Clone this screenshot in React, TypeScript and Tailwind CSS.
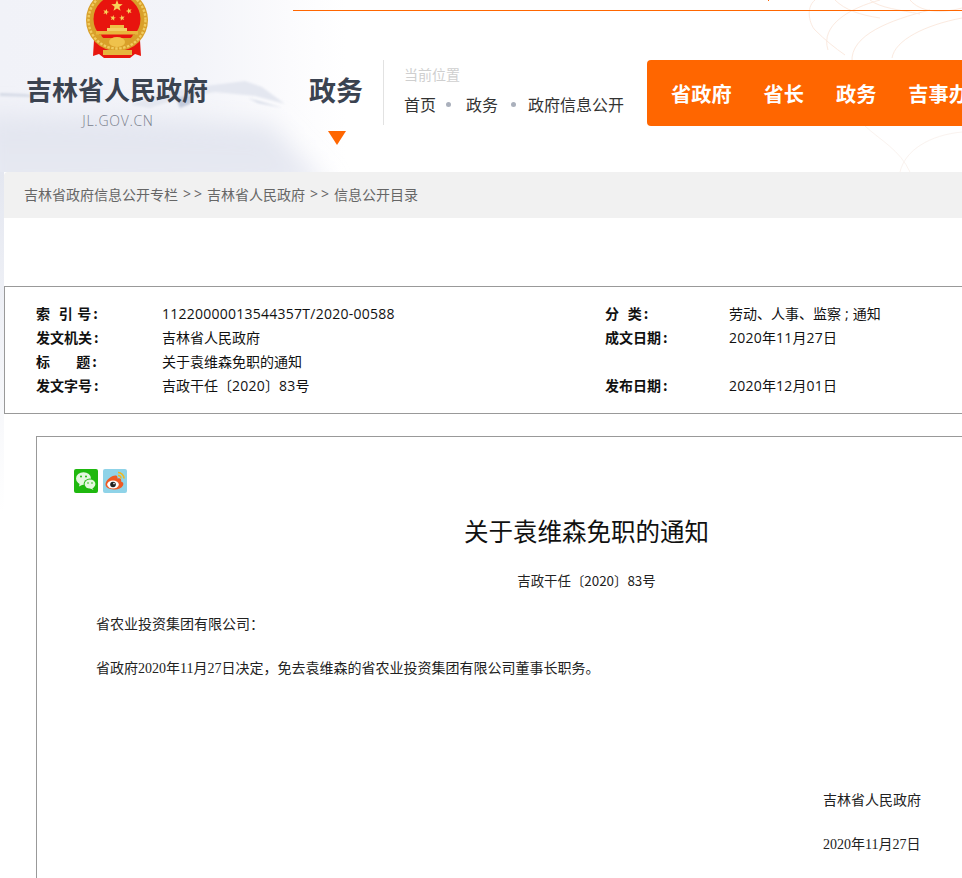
import type { ReactNode } from "react";

const cjk = "font-['Noto_Sans_CJK_SC',sans-serif]";

function Star({ x, y, r, rot = 0 }: { x: number; y: number; r: number; rot?: number }) {
  const pts: string[] = [];
  for (let i = 0; i < 10; i++) {
    const a = (Math.PI / 5) * i - Math.PI / 2 + rot;
    const d = i % 2 === 0 ? r : r * 0.42;
    pts.push(`${x + d * Math.cos(a)},${y + d * Math.sin(a)}`);
  }
  return <polygon points={pts.join(" ")} fill="#f8d25a" />;
}

function Emblem() {
  return (
    <svg width="64" height="70" viewBox="0 -11 64 70" className="block">
      <path d="M9 40 L8 56 L14 54 L19 58 L45 58 L50 54 L56 56 L55 40 Z" fill="#e8170f" />
      <circle cx="32" cy="20" r="31" fill="#d9a02a" />
      <circle cx="32" cy="20" r="28.5" fill="none" stroke="#f1cc60" strokeWidth="2.4" strokeDasharray="2.5 1.5" />
      <circle cx="32" cy="19" r="23.5" fill="#e8140e" />
      <Star x={32} y={6} r={6} />
      <Star x={21} y={12} r={3.2} rot={0.3} />
      <Star x={44} y={11} r={3.2} rot={-0.3} />
      <Star x={28} y={18} r={3} rot={0.2} />
      <Star x={37} y={18} r={3} rot={-0.2} />
      <rect x="25" y="25" width="14" height="3" fill="#eebf45" />
      <rect x="22" y="28" width="20" height="3" fill="#f3cf63" />
      <rect x="11" y="31" width="42" height="3.5" fill="#e9b53c" />
      <path d="M10 37 Q32 52 54 37 L48 34 L47 38 L17 38 L16 34 Z" fill="#d9a02a" />
      <ellipse cx="32" cy="42" rx="8" ry="5" fill="#efc24c" />
      <rect x="18" y="50" width="29" height="5" fill="#e6b53e" />
    </svg>
  );
}

function WeChat() {
  return (
    <svg width="24" height="24" viewBox="0 0 24 24" className="block">
      <rect width="24" height="24" rx="2" fill="#1fb80f" />
      <ellipse cx="9.5" cy="9.5" rx="7.5" ry="6.3" fill="#e4f7de" />
      <path d="M6 13 L5 17.5 L10 15 Z" fill="#e4f7de" />
      <ellipse cx="16" cy="15" rx="6.4" ry="5.4" fill="#1fb80f" />
      <ellipse cx="16" cy="15" rx="5.4" ry="4.6" fill="#e4f7de" />
      <path d="M18 18.5 L19.5 21 L15.5 19 Z" fill="#e4f7de" />
      <circle cx="7" cy="7.5" r="1" fill="#1fb80f" />
      <circle cx="12" cy="7.5" r="1" fill="#1fb80f" />
      <circle cx="14" cy="14" r=".8" fill="#1fb80f" />
      <circle cx="18" cy="14" r=".8" fill="#1fb80f" />
    </svg>
  );
}

function Weibo() {
  return (
    <svg width="24" height="24" viewBox="0 0 24 24" className="block">
      <rect width="24" height="24" rx="2" fill="#8fd3e8" />
      <path d="M2.5 15.5 C2.5 11 9 6 13 6.5 C15 7 14.5 9.5 14.5 9.5 C17 8.5 19 10 18 12.5 C20 13 21 14.5 20 16.5 C18.5 19.5 14 21 10.5 20.5 C6 20 2.5 18.5 2.5 15.5 Z" fill="#ee5a24" />
      <ellipse cx="10" cy="15.5" rx="5.8" ry="4" fill="#fff" />
      <circle cx="10" cy="15.5" r="2.8" fill="#222" />
      <circle cx="11" cy="14.6" r=".8" fill="#fff" />
      <path d="M15 3.5 A6 6 0 0 1 21 9.5" stroke="#f2b71f" strokeWidth="1.6" fill="none" />
      <path d="M15 6.5 A3 3 0 0 1 18 9.5" stroke="#f2b71f" strokeWidth="1.4" fill="none" />
    </svg>
  );
}

function HeaderArt() {
  return (
    <svg className="absolute left-0 top-0" width="962" height="172" viewBox="0 0 962 172" aria-hidden="true">
      <defs>
        <linearGradient id="sky" x1="0" x2="1" y1="0" y2="0">
          <stop offset="0" stopColor="#f1f2f8" />
          <stop offset="0.2" stopColor="#f3f4f9" />
          <stop offset="0.3" stopColor="#fbfbfd" />
          <stop offset="0.36" stopColor="#ffffff" />
        </linearGradient>
        <linearGradient id="mist" x1="0" x2="0" y1="0" y2="1">
          <stop offset="0" stopColor="#e2e5ef" />
          <stop offset="1" stopColor="#e8eaf3" />
        </linearGradient>
        <filter id="soft" x="-20%" y="-40%" width="140%" height="180%">
          <feGaussianBlur stdDeviation="12" />
        </filter>
        <filter id="soft2" x="-10%" y="-50%" width="120%" height="200%">
          <feGaussianBlur stdDeviation="1.2" />
        </filter>
      </defs>
      <rect width="962" height="172" fill="url(#sky)" />
      <path d="M-20 115 L120 118 L270 125 L330 190 L-20 200 Z" fill="url(#mist)" filter="url(#soft)" />
      <path d="M0 93 L25 94 L50 98 L35 97 L0 96 Z" fill="#d5dae6" filter="url(#soft2)" />
      <path d="M130 105 L165 92 L205 86 L245 81 L262 87 L285 104 L255 96 L215 92 L180 98 L150 108 Z" fill="#e4e7f0" filter="url(#soft2)" />
      <path d="M176 98 L195 94 L190 104 L180 108 Z" fill="#c3cbdc" filter="url(#soft2)" />
      <path d="M248 98 L283 108 L258 103 Z" fill="#d6dbe7" filter="url(#soft2)" />
      <g fill="none" stroke="#fbeae0" strokeWidth="1">
        <path d="M815 0 C805 8 810 25 815 30" />
        <path d="M880 0 C850 8 820 25 828 50" />
        <path d="M930 10 C890 20 850 35 852 62" />
        <path d="M962 18 C925 25 895 40 892 58" />
        <path d="M835 0 C845 10 860 15 880 18" />
        <path d="M910 0 C920 12 940 14 962 8" />
        <path d="M870 0 C880 8 900 10 920 14" />
        <path d="M815 30 C825 40 835 48 845 55" />
      </g>
      <g fill="none" stroke="#faf3ef" strokeWidth="1">
        <path d="M865 126 C880 140 900 150 910 172" />
        <path d="M962 132 C930 135 905 150 900 172" />
      </g>
      <rect x="768" y="0" width="1" height="1" fill="#ff6600" />
    </svg>
  );
}

function Latin({ text }: { text: string }) {
  return (
    <>
      {text.split(/([0-9A-Za-z/\-; ]+)/).map((part, i) =>
        i % 2 === 1 ? (
          <span key={i} className="font-['Open_Sans',sans-serif] tracking-[0.25px]">{part}</span>
        ) : (
          part
        ),
      )}
    </>
  );
}

function Label({ children }: { children: ReactNode }) {
  return (
    <span className="font-bold whitespace-pre [word-spacing:1.2px]">
      {children}
      {children ? <span className="ml-0.5">:</span> : null}
    </span>
  );
}

function Row({ label, value, label2, value2 }: { label: string; value: string; label2?: string; value2?: string }) {
  return (
    <div className="flex h-6 items-center text-sm text-[#111]">
      <div className="w-[126px]">
        <Label>{label}</Label>
      </div>
      <div className="w-[443px]">
        <Latin text={value} />
      </div>
      <div className="w-[124px]">
        <Label>{label2}</Label>
      </div>
      <div>
        <Latin text={value2 ?? ""} />
      </div>
    </div>
  );
}

function Sep() {
  return <span className="mr-[2px] ml-[5px] tracking-[3px] font-['Open_Sans',sans-serif]">&gt;&gt;</span>;
}

const bodyFont = "font-['Liberation_Serif','Noto_Sans_CJK_SC',sans-serif]";

export default function App() {
  return (
    <div className={`relative h-[878px] w-[962px] overflow-hidden bg-white ${cjk}`}>
      <div className="absolute left-0 top-[172px] h-[340px] w-1 bg-gradient-to-b from-[#e4e7f0] to-white" />
      <header className="relative h-[172px] w-[962px] overflow-hidden">
        <HeaderArt />
        <div className="absolute left-[293px] right-0 top-[10px] h-px bg-[#ff6600]" />
        <div className="relative flex h-full whitespace-nowrap">
          <div className="flex w-[293px] shrink-0 flex-col items-center pr-[59px]">
            <div className="mt-[-11px]">
              <Emblem />
            </div>
            <div className="mt-[13px] text-[26px] leading-[34px] font-bold text-[#3b4350]">吉林省人民政府</div>
            <div className="mt-[5px] ml-[2px] text-sm leading-5 font-light tracking-[0.7px] text-[#7a808c] font-['Open_Sans',sans-serif]">JL.GOV.CN</div>
          </div>
          <div className="ml-4 flex w-[74px] shrink-0 flex-col items-start pt-[71px]">
            <div className="text-[27px] leading-[38px] font-bold text-[#3b4350]">政务</div>
            <div className="mt-[22px] ml-[19px] h-0 w-0 border-x-[9px] border-t-[14px] border-x-transparent border-t-[#ff6600]" />
          </div>
          <div className="mt-[60px] h-[65px] w-[264px] shrink-0 border-l border-[#e2e2e2] pl-5">
            <div className="mt-1 text-sm leading-5 text-[#cfcfcf]">当前位置</div>
            <div className="mt-[8px] flex items-center text-base leading-6 text-[#333]">
              <span>首页</span>
              <span className="mr-[9px] ml-[10px] h-[5px] w-[5px] rounded-full bg-[#aab0bc]" />
              <span className="ml-1.5">政务</span>
              <span className="mr-3 ml-[13px] h-[5px] w-[5px] rounded-full bg-[#aab0bc]" />
              <span>政府信息公开</span>
            </div>
          </div>
          <nav className="mt-[60px] flex h-[66px] w-[315px] shrink-0 items-center gap-8 overflow-hidden rounded-l bg-[#ff6600] pt-0.5 pl-6 text-[20.2px] font-bold whitespace-nowrap text-white">
            <span>省政府</span>
            <span>省长</span>
            <span>政务</span>
            <span className="shrink-0">吉事办</span>
          </nav>
        </div>
      </header>

      <div className="ml-1 flex h-[46px] w-[958px] items-center rounded-tl bg-[#f1f1f1] pb-0.5 pl-5 text-sm text-[#666]">
        吉林省政府信息公开专栏<Sep />吉林省人民政府<Sep />信息公开目录
      </div>

      <section className="mt-[68px] ml-1 w-[1164px] border border-[#999] px-[31px] pt-[14px] pb-4">
        <Row label="索  引 号" value="11220000013544357T/2020-00588" label2="分  类" value2="劳动、人事、监察 ; 通知" />
        <Row label="发文机关" value="吉林省人民政府" label2="成文日期" value2="2020年11月27日" />
        <Row label={"标      题"} value="关于袁维森免职的通知" />
        <Row label="发文字号" value="吉政干任〔2020〕83号" label2="发布日期" value2="2020年12月01日" />
      </section>

      <article className="mt-[22px] ml-9 h-[600px] w-[1100px] border border-[#999] pt-8 pr-[36px] pl-[37px]">
        <div className="flex gap-[5px]">
          <WeChat />
          <Weibo />
        </div>
        <h1 className="mt-[22px] text-center text-[24.5px] leading-8 text-[#111] font-['Noto_Sans_CJK_SC',serif]">关于袁维森免职的通知</h1>
        <p className="mt-[23px] text-center text-[13.4px] leading-5 text-[#222]">吉政干任〔2020〕83号</p>
        <div className={`mt-[23px] ml-[22px] text-sm leading-6 text-[#222] ${bodyFont}`}>
          <p>省农业投资集团有限公司：</p>
          <p className="mt-5">省政府2020年11月27日决定，免去袁维森的省农业投资集团有限公司董事长职务。</p>
          <p className="mt-[108px] ml-[727px]">吉林省人民政府</p>
          <p className="mt-5 ml-[727px]">2020年11月27日</p>
        </div>
      </article>
    </div>
  );
}
